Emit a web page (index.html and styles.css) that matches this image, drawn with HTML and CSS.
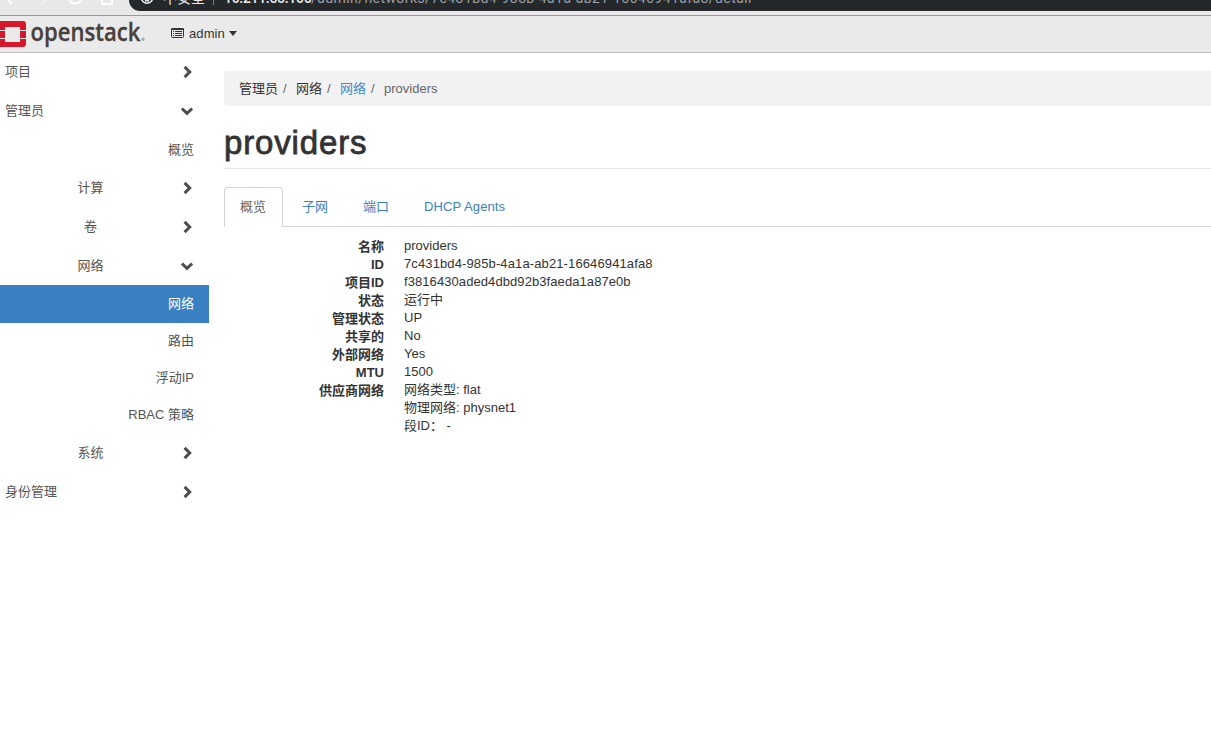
FILE: index.html
```html
<!DOCTYPE html>
<html lang="zh-CN">
<head>
<meta charset="utf-8">
<title>providers - OpenStack Dashboard</title>
<link rel="stylesheet" href="styles.css">
</head>
<body>
<svg class="defs" width="0" height="0" aria-hidden="true">
  <symbol id="right" viewBox="0 0 14 14"><path d="M4.6 1.9 9.7 7 4.6 12.1" fill="none" stroke="currentColor" stroke-width="3"/></symbol>
  <symbol id="down" viewBox="0 0 14 14"><path d="M1.9 4.5 7 9.4 12.1 4.5" fill="none" stroke="currentColor" stroke-width="3"/></symbol>
</svg>
<div class="browser">
  <svg class="browser-icons" width="129" height="15" viewBox="0 0 129 15" fill="none" stroke="#fff" stroke-width="2">
    <path d="M12 4 6 -2"/><path d="M42 4 48 -2" stroke="#f1f1f1"/>
    <path d="M69 -2a6 5.5 0 0 0 12 0"/><path d="M102 -2V4h10V-2"/>
  </svg>
  <div class="address">
    <svg class="info" width="14" height="8" viewBox="0 0 14 8" fill="none" stroke="#e8eaed" stroke-width="1.6"><circle cx="7" cy="-2.5" r="5.7"/><path d="M7 -2V.8M5 .8h4"/></svg>
    <span class="insecure">不安全</span><span class="divider"></span>
    <span class="url"><b>10.211.55.106</b><span class="path">/admin/networks/7c431bd4-985b-4a1a-ab21-16646941afa8/detail</span></span>
  </div>
</div>
<header class="navbar">
  <svg class="logo" width="150" height="36" viewBox="0 0 150 36">
    <path fill="#d9152c" d="M0 5h23a3 3 0 0 1 3 3v6h-6v-3H5v3H0zM0 15h5v7H0zM20 15h6v7h-6zM0 23h5v3h15v-3h6v5a3 3 0 0 1-3 3H0z"/>
    <text class="wordmark" x="30.5" y="25" textLength="110" lengthAdjust="spacingAndGlyphs">openstack</text>
    <circle cx="143" cy="23.3" r="1.3" fill="#aaa" stroke="#999" stroke-width=".5"/>
  </svg>
  <div class="user">
    <svg width="13" height="11" viewBox="0 0 13 11"><rect x=".5" y=".5" width="12" height="9" rx="1" fill="none" stroke="#333"/><path d="M0 .5h13V2H0zM2 3h1v1H2zM4 3h7v1H4zM2 5h1v1H2zM4 5h7v1H4zM2 7h1v1H2zM4 7h7v1H4z" fill="#333"/></svg>
    <span>admin</span><i class="caret"></i>
  </div>
</header>
<div class="layout">
  <nav class="sidebar">
    <a class="row top">项目<svg><use href="#right"/></svg></a>
    <a class="row top">管理员<svg><use href="#down"/></svg></a>
    <a class="row leaf overview">概览</a>
    <a class="row group"><span>计算</span><svg><use href="#right"/></svg></a>
    <a class="row group"><span>卷</span><svg><use href="#right"/></svg></a>
    <a class="row group open"><span>网络</span><svg><use href="#down"/></svg></a>
    <a class="row leaf active">网络</a>
    <a class="row leaf">路由</a>
    <a class="row leaf">浮动IP</a>
    <a class="row leaf">RBAC 策略</a>
    <a class="row group"><span>系统</span><svg><use href="#right"/></svg></a>
    <a class="row top">身份管理<svg><use href="#right"/></svg></a>
  </nav>
  <main class="content">
    <div class="breadcrumb"><span>管理员</span><i>/</i><span>网络</span><i>/</i><a>网络</a><i>/</i><em>providers</em></div>
    <h1 class="title">providers</h1>
    <div class="tabs"><a class="tab current">概览</a><a class="tab">子网</a><a class="tab">端口</a><a class="tab agents">DHCP Agents</a></div>
    <dl class="details">
      <dt>名称</dt><dd>providers</dd>
      <dt>ID</dt><dd class="uuid">7c431bd4-985b-4a1a-ab21-16646941afa8</dd>
      <dt>项目ID</dt><dd class="hex">f3816430aded4dbd92b3faeda1a87e0b</dd>
      <dt>状态</dt><dd>运行中</dd>
      <dt>管理状态</dt><dd>UP</dd>
      <dt>共享的</dt><dd>No</dd>
      <dt>外部网络</dt><dd>Yes</dd>
      <dt>MTU</dt><dd>1500</dd>
      <dt>供应商网络</dt><dd>网络类型: flat</dd>
      <dd>物理网络: physnet1</dd>
      <dd>段ID： -</dd>
    </dl>
  </main>
</div>
</body>
</html>
```
FILE: styles.css
```css
* { box-sizing: border-box; }
body {
  margin: 0;
  height: 731px;
  overflow: hidden;
  background: #fff;
  color: #333;
  font: 13px/18px "Liberation Sans", "Noto Sans CJK SC", sans-serif;
}
.defs { display: none; }
svg { flex: none; }

.browser {
  display: flex;
  height: 16px;
  overflow: hidden;
  background: #e8e8e8;
  border-bottom: 1px solid #999;
}
.address {
  display: flex;
  flex: 1;
  height: 11px;
  overflow: hidden;
  padding-left: 11px;
  background: #24282b;
  border-radius: 0 0 0 16px;
  color: #e8eaed;
  font-size: 14px;
  line-height: 16px;
  white-space: nowrap;
}
.insecure { width: 42px; margin: -10px 0 0 9px; }
.divider { width: 1px; height: 5px; margin: 0 10px 0 8px; background: #75797d; }
.url { margin-top: -10px; font-family: Roboto, sans-serif; }
.url b { display: inline-block; width: 87px; font-weight: 500; letter-spacing: -.3px; }
.path { color: #9aa0a6; letter-spacing: .42px; }

.navbar {
  display: flex;
  align-items: center;
  height: 37px;
  background: #eaeaea;
  border-bottom: 1px solid #c0c0c0;
}
.wordmark { font: 600 25px "Open Sans", sans-serif; fill: #48403a; stroke: #48403a; stroke-width: .3px; }
.user { display: flex; align-items: center; margin-left: 21px; }
.user svg { margin-top: -1px; }
.user span { margin-left: 5px; letter-spacing: .1px; }
.caret {
  margin: -1px 0 0 4px;
  border: 4px solid transparent;
  border-top: 5px solid #333;
  border-bottom: 0;
}

.layout { display: flex; }
.sidebar { width: 209px; color: #555; }
.row {
  display: flex;
  align-items: center;
  justify-content: space-between;
  height: 39px;
  padding: 0 15px 1px 5px;
}
.row svg { width: 14px; height: 14px; color: #4d4d4d; }
.group span { width: 171px; text-align: center; }
.group.open { height: 38px; }
.leaf { justify-content: flex-end; height: 37px; }
.leaf.overview { height: 38px; }
.leaf.active { height: 38px; background: #3980c3; color: #fff; }

.content { flex: 1; padding: 18px 0 0 15px; }
.breadcrumb {
  display: flex;
  align-items: center;
  height: 35px;
  padding-left: 15px;
  background: #f2f2f2;
  border-radius: 4px 0 0 4px;
}
.breadcrumb i { width: 18px; padding-left: 5px; color: #666; font-style: normal; }
.breadcrumb em { color: #666; font-style: normal; }
.breadcrumb a { color: #428bca; }
.title {
  height: 63px;
  margin: 0;
  padding-top: 18px;
  border-bottom: 1px solid #e8e8e8;
  font-size: 33px;
  font-weight: 500;
  line-height: 38px;
  letter-spacing: .85px;
  -webkit-text-stroke: .8px #333;
}
.tabs { display: flex; height: 40px; margin-top: 18px; border-bottom: 1px solid #d4d4d4; }
.tab { padding: 11px 16px 0; margin-right: 3px; color: #3a80c2; }
.tab.agents { letter-spacing: .1px; }
.tab.current {
  width: 59px;
  height: 40px;
  padding: 10px 15px 0;
  background: #fff;
  border: 1px solid #d4d4d4;
  border-bottom: 0;
  border-radius: 4px 4px 0 0;
  color: #666;
}
.details {
  display: grid;
  grid-template-columns: 160px 1fr;
  grid-auto-rows: 18px;
  column-gap: 20px;
  margin: 10px 0 0;
}
.details dt { text-align: right; font-weight: bold; padding-top: 1px; }
.details dd { grid-column: 2; margin: 0; }
.details .uuid { letter-spacing: .12px; }
.details .hex { letter-spacing: .08px; }
```
